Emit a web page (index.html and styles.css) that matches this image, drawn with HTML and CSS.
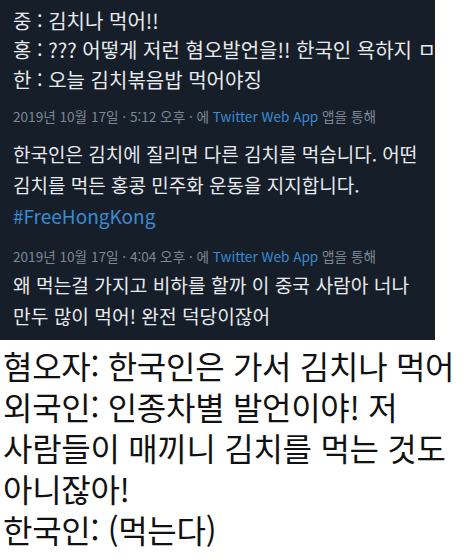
FILE: index.html
```html
<!DOCTYPE html>
<html lang="ko">
<head>
    <meta charset="utf-8">
    <meta name="viewport" content="width=device-width, initial-scale=1.0">
    <title>김치</title>
    <link rel="stylesheet" href="styles.css">
</head>
<body>
    <div class="tweet-box">
        <div class="tweet first">
            <p class="line">중 : 김치나 먹어!!</p>
            <p class="line">홍 : ??? 어떻게 저런 혐오발언을!! 한국인 욕하지 ㅁ</p>
            <p class="line">한 : 오늘 김치볶음밥 먹어야징</p>
            <p class="meta">2019년 10월 17일 · 5:12 오후 · 에 <span class="link">Twitter Web App</span> 앱을 통해</p>
        </div>
        <div class="tweet second">
            <p class="line">한국인은 김치에 질리면 다른 김치를 먹습니다. 어떤</p>
            <p class="line">김치를 먹든 홍콩 민주화 운동을 지지합니다.</p>
            <p class="line link">#FreeHongKong</p>
            <p class="meta">2019년 10월 17일 · 4:04 오후 · 에 <span class="link">Twitter Web App</span> 앱을 통해</p>
        </div>
        <div class="tweet third">
            <p class="line">왜 먹는걸 가지고 비하를 할까 이 중국 사람아 너나</p>
            <p class="line">만두 많이 먹어! 완전 덕당이잖어</p>
        </div>
    </div>
    <div class="caption">
        <p>혐오자: 한국인은 가서 김치나 먹어</p>
        <p>외국인: 인종차별 발언이야! 저</p>
        <p>사람들이 매끼니 김치를 먹는 것도</p>
        <p>아니잖아!</p>
        <p>한국인: (먹는다)</p>
    </div>
</body>
</html>
```

FILE: styles.css
```css
body {
    margin: 0;
    background: #fff;
    font-family: "Noto Sans CJK KR", "Noto Sans", sans-serif;
}
p {
    margin: 0;
    white-space: nowrap;
}
.tweet-box {
    width: 435px;
    height: 340px;
    background: #161e2a;
    color: #e8eaec;
    overflow: hidden;
    box-sizing: border-box;
    padding: 5.5px 0 0 13px;
}
.line {
    font-size: 20px;
    line-height: 29.5px;
}
.meta {
    font-size: 13.6px;
    line-height: 20px;
    color: #7c8894;
    margin-top: 11.5px;
}
.link {
    color: #3a8bd2;
}
.second {
    margin-top: 12.5px;
}
.second .line {
    font-size: 19px;
    line-height: 31px;
}
.second .meta {
    margin-top: 14.5px;
}
.third {
    margin-top: 4px;
}
.third .line {
    font-size: 19.2px;
    line-height: 31px;
}
.caption {
    padding: 5px 0 0 3px;
    color: #111;
}
.caption p {
    font-size: 32px;
    line-height: 41px;
    letter-spacing: -0.3px;
}
```
